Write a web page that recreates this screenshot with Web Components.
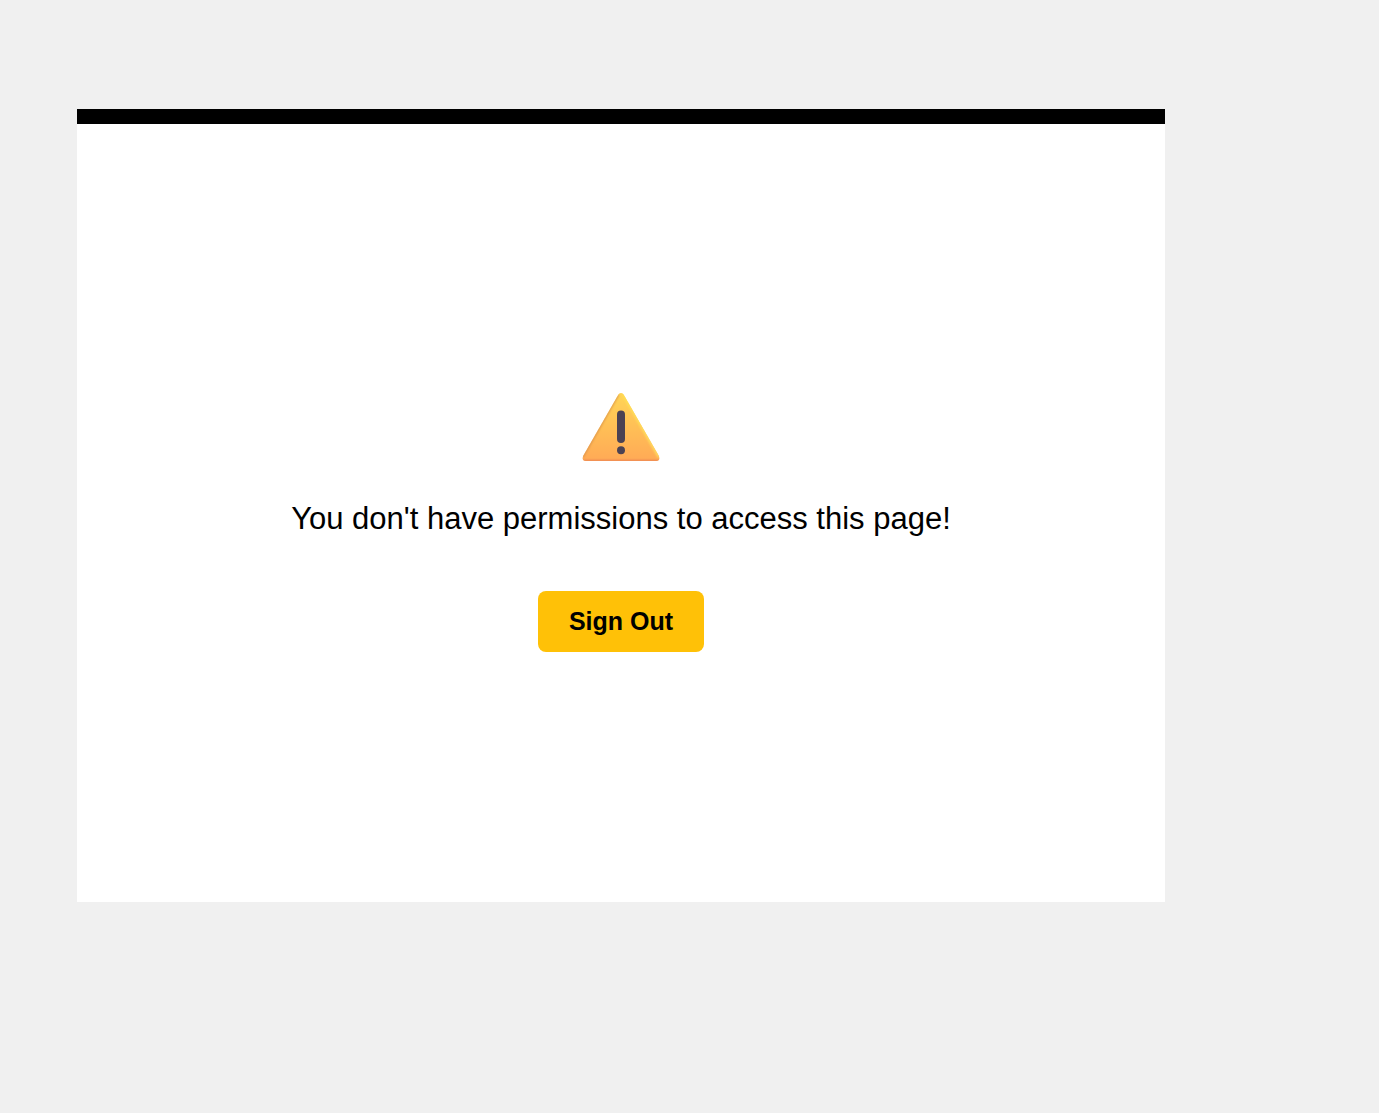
<!DOCTYPE html>
<html lang="en">
<head>
<meta charset="utf-8">
<meta name="viewport" content="width=device-width, initial-scale=1">
<title>Access denied</title>
<style>
  body {
    margin: 0;
    background: #f0f0f0;
    color: #000;
    font-family: Arial, "Liberation Sans", sans-serif;
  }
</style>
</head>
<body>
<access-page>
  <warning-icon slot="icon"></warning-icon>
  You don't have permissions to access this page!
  <action-button slot="action">Sign Out</action-button>
</access-page>

<script>
class WarningIcon extends HTMLElement {
  constructor() {
    super();
    this.attachShadow({ mode: "open" });
  }

  connectedCallback() {
    this.shadowRoot.innerHTML = `
      <style>
        :host {
          display: block;
          width: 78px;
          height: 69px;
        }

        svg {
          display: block;
          width: 100%;
          height: 100%;
        }
      </style>
      <svg viewBox="0 0 78 69" role="img" aria-label="Warning">
        <defs>
          <linearGradient id="fill" x1="0" y1="0" x2="0" y2="1">
            <stop offset="0" stop-color="#ffd556"/>
            <stop offset="1" stop-color="#ffa956"/>
          </linearGradient>
          <linearGradient id="right" x1="0" y1="0" x2="0" y2="1">
            <stop offset="0" stop-color="#ffe052"/>
            <stop offset="1" stop-color="#ffdc60"/>
          </linearGradient>
          <clipPath id="shape">
            <path d="M36.4 1.5Q39 -1.4 41.6 1.5L76.9 63Q78.4 67.6 74.3 68H3.7Q-0.4 67.6 1.1 63Z"/>
          </clipPath>
          <filter id="soft" x="-10%" y="-10%" width="120%" height="120%">
            <feGaussianBlur stdDeviation="0.8"/>
          </filter>
        </defs>
        <g clip-path="url(#shape)">
          <rect width="78" height="69" fill="url(#fill)"/>
          <g filter="url(#soft)" fill="none" stroke-width="2">
            <path d="M36.2 1.4L0.5 64" stroke="#d9924a"/>
            <path d="M0 68H78" stroke="#e98050"/>
            <path d="M41.6 1.4L77.2 64" stroke="url(#right)" stroke-width="3"/>
          </g>
        </g>
        <rect x="35" y="17.5" width="8" height="32.5" rx="4" fill="#4b4253"/>
        <circle cx="39" cy="57.2" r="4" fill="#4b4253"/>
      </svg>
    `;
  }
}

class ActionButton extends HTMLElement {
  constructor() {
    super();
    this.attachShadow({ mode: "open" });
  }

  connectedCallback() {
    this.shadowRoot.innerHTML = `
      <style>
        :host {
          display: block;
        }

        button {
          display: block;
          padding: 16px 31px;
          border: 0;
          border-radius: 8px;
          background: #ffc107;
          color: #000;
          font: bold 25px/29px Arial, "Liberation Sans", sans-serif;
          cursor: pointer;
        }

        button:hover {
          background: #e0a800;
        }
      </style>
      <button type="button"><slot></slot></button>
    `;
  }
}

class AccessPage extends HTMLElement {
  constructor() {
    super();
    this.attachShadow({ mode: "open" });
  }

  connectedCallback() {
    this.shadowRoot.innerHTML = `
      <style>
        :host {
          display: block;
          box-sizing: border-box;
          min-height: 100vh;
          padding: 109px 214px 211px 77px;
        }

        main {
          display: flex;
          flex-direction: column;
          align-items: center;
          justify-content: center;
          box-sizing: border-box;
          min-height: calc(100vh - 320px);
          padding-top: 18px;
          border-top: 15px solid #000;
          background: #fff;
        }

        p {
          margin: 39px 0 54px;
          font-size: 31px;
          line-height: 36px;
          text-align: center;
        }

        @media (max-width: 900px) {
          :host {
            padding: 40px 20px;
          }
        }
      </style>
      <main>
        <slot name="icon"></slot>
        <p><slot></slot></p>
        <slot name="action"></slot>
      </main>
    `;
  }
}

customElements.define("warning-icon", WarningIcon);
customElements.define("action-button", ActionButton);
customElements.define("access-page", AccessPage);
</script>
</body>
</html>
